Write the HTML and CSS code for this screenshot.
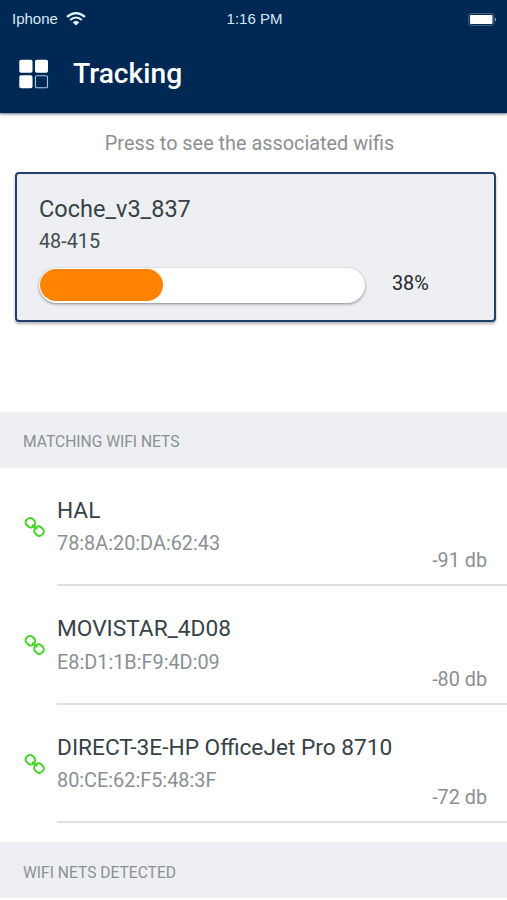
FILE: index.html
```html
<!DOCTYPE html>
<html lang="en">
<head>
<meta charset="utf-8">
<title>Tracking</title>
<link rel="stylesheet" href="styles.css">
</head>
<body>
<svg class="defs" width="0" height="0" aria-hidden="true">
  <symbol id="link" viewBox="0 0 22 22">
    <rect x="1.7" y="2.500" width="9.400" height="8.400" rx="3.600" transform="rotate(42 6.400 6.700)"/>
    <rect x="10.300" y="10.900" width="9.400" height="8.400" rx="3.600" transform="rotate(42 15 15.100)"/>
    <path d="M8.200 8.700l5 4.500"/>
  </symbol>
</svg>
<header class="header">
  <div class="status">
    <div class="carrier"><span>Iphone</span>
      <svg class="wifi" width="20" height="14" viewBox="0 0 20 14" fill="none" stroke="#e4f8ff" stroke-width="2.1">
        <path d="M1 4.9Q10-2.7 19 4.9M4.2 8Q10 3 15.800 8"/>
        <path d="M6.700 10.200Q10 7.600 13.300 10.200L10 13.500Z" fill="#e4f8ff" stroke="none"/>
      </svg>
    </div>
    <span class="time">1:16 PM</span>
    <svg class="battery" width="29" height="13" viewBox="0 0 29 13">
      <rect x=".6" y=".6" width="25.400" height="11.800" rx="2.500" fill="none" stroke="#456b7c"/>
      <rect x="2" y="2" width="22.500" height="9" rx="1" fill="#fff"/>
      <path d="M27 4.500q2 2 0 4z" fill="#9fc0cf"/>
    </svg>
  </div>
  <div class="toolbar">
    <svg class="grid-icon" width="30" height="30" viewBox="0 0 30 30" fill="#fff">
      <rect x=".3" y=".8" width="13.200" height="13" rx="1.800"/>
      <rect x="16" y=".8" width="13" height="13" rx="1.800"/>
      <rect x=".3" y="16.200" width="13.200" height="13" rx="1.800"/>
      <rect x="16.500" y="16.700" width="12" height="12" rx="1.300" fill="none" stroke="#a9c4e4" stroke-width="1.100"/>
    </svg>
    <h1 class="title">Tracking</h1>
  </div>
</header>
<main>
  <p class="hint">Press to see the associated wifis</p>
  <section class="card">
    <h2 class="card-name">Coche_v3_837</h2>
    <p class="card-code">48-415</p>
    <div class="progress">
      <div class="track"><div class="fill" style="width:38%"></div></div>
      <span class="percent">38%</span>
    </div>
  </section>
  <h3 class="section">MATCHING WIFI NETS</h3>
  <ul class="nets">
    <li class="net"><svg class="link"><use href="#link"/></svg>
      <div class="net-body"><div class="net-name">HAL</div><div class="mac">78:8A:20:DA:62:43</div><div class="signal">-91 db</div></div></li>
    <li class="net"><svg class="link"><use href="#link"/></svg>
      <div class="net-body"><div class="net-name">MOVISTAR_4D08</div><div class="mac">E8:D1:1B:F9:4D:09</div><div class="signal">-80 db</div></div></li>
    <li class="net"><svg class="link"><use href="#link"/></svg>
      <div class="net-body"><div class="net-name">DIRECT-3E-HP OfficeJet Pro 8710</div><div class="mac">80:CE:62:F5:48:3F</div><div class="signal">-72 db</div></div></li>
  </ul>
  <h3 class="section">WIFI NETS DETECTED</h3>
</main>
</body>
</html>
```
FILE: styles.css
```css
* { box-sizing: border-box; margin: 0; padding: 0; }
body { height: 900px; overflow: hidden; background: #fff; color: #364247; font-family: Roboto, sans-serif; }
.defs { display: block; }
.header { height: 113px; background: #002855; color: #fff; box-shadow: 0 1px 2px rgba(0, 20, 60, .5), 0 2px 4px rgba(0, 0, 0, .12); }
.status { display: grid; grid-template-columns: 1fr auto 1fr; align-items: center; height: 38px; padding: 0 10px 0 12px; color: #d5e9f5; font: 15px/20px "Liberation Sans", sans-serif; }
.carrier { display: flex; align-items: center; gap: 8px; }
.battery { justify-self: end; }
.toolbar { display: flex; align-items: center; height: 72px; padding-left: 19px; gap: 24px; }
.title { font-size: 28.200px; font-weight: 500; line-height: 32px; }
.hint { padding: 18px 8px 0 0; height: 59px; text-align: center; color: #8c8f92; font-size: 19.850px; line-height: 25px; }
.card { margin: 0 11px 0 15px; height: 150px; padding: 19px 22px 0; background: #edeff3; border: 2px solid #20406b; border-radius: 4px; box-shadow: 0 2px 3px rgba(0, 0, 0, .3); }
.card-name { font-size: 23.500px; font-weight: 400; line-height: 32px; }
.card-code { margin-top: 2px; font-size: 19.800px; line-height: 30px; color: #444b50; }
.progress { display: flex; align-items: center; margin-top: 11px; gap: 27px; }
.track { width: 326px; height: 35px; padding: 1px 1px 2px; border-radius: 18px; background: #fff; box-shadow: 0 1px 3px rgba(0, 0, 0, .45); }
.fill { height: 32px; border-radius: 16px; background: #ff8200; }
.percent { font-size: 19.800px; line-height: 24px; color: #24272b; margin-top: -4px; }
.section { height: 56px; padding: 2px 23px 0; background: #edeff3; color: #8b8f94; font-size: 15.600px; font-weight: 400; line-height: 56px; }
.card + .section { margin-top: 89.500px; }
.nets { list-style: none; margin-bottom: 18.500px; }
.net { display: flex; height: 118.670px; padding-left: 24px; gap: 11px; }
.link { width: 22px; height: 22px; margin-top: 48px; fill: none; stroke: #43d425; stroke-width: 2; }
.net-body { flex: 1; padding: 28px 20px 0 0; border-bottom: 2px solid #dfe0e2; }
.net-name { font-size: 22.680px; line-height: 30px; }
.mac { margin-top: 4.500px; color: #8b8f94; font-size: 19.850px; line-height: 28px; }
.signal { margin-top: -11px; text-align: right; color: #8b8f94; font-size: 19.800px; line-height: 27px; }
.nets + .section { padding-top: 3px; }
```
